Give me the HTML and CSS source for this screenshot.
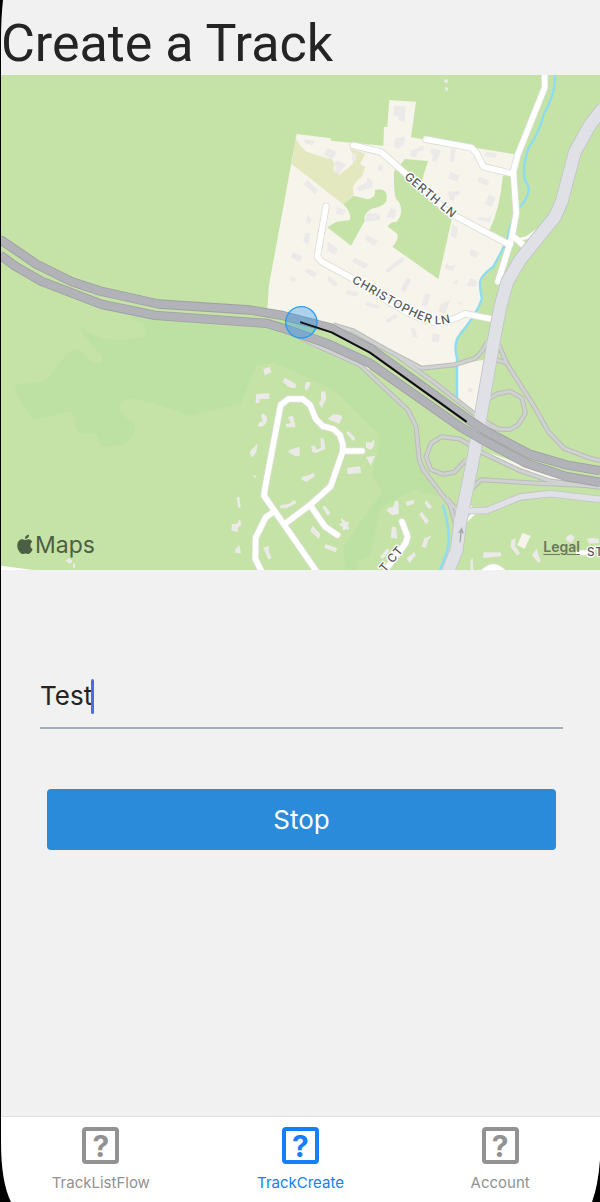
FILE: index.html
```html
<!DOCTYPE html>
<html lang="en">
<head>
<meta charset="utf-8">
<meta name="viewport" content="width=device-width, initial-scale=1">
<title>Create a Track</title>
<link rel="stylesheet" href="styles.css">
</head>
<body>
<div class="screen">
  <header class="header"><h1 class="title">Create a Track</h1></header>

  <div class="map">
    <svg class="map-canvas" viewBox="3 0 1797 1485" preserveAspectRatio="xMidYMid slice" role="img" aria-label="Map with the recorded track">
      <defs>
        <path id="gerth" d="M1211 308L1370 442"/>
        <path id="christopher" d="M1054 622C1150 674 1250 742 1310 748Q1346 750 1385 728"/>
        <path id="court" d="M1154 1494L1214 1424"/>
        <path id="up1" d="M0 493L110 568L215 620L300 648L475 687L750 705L850 722L990 758L1110 820L1415 1040L1460 1070L1590 1138L1700 1170L1800 1187"/>
        <path id="down1" d="M0 540L45 573L125 619L305 688L465 721L800 745L860 763L980 805L1110 865L1380 1055L1440 1090L1580 1165L1700 1205L1800 1222"/>
        <g id="ramps">
          <path d="M870 770L935 805L1080 870L1140 927L1224 1005L1248 1055L1258 1155L1270 1185L1350 1290L1372 1365"/>
          <path d="M1340 1270L1375 1310"/>
          <path d="M1000 750L1060 768L1160 825L1265 880L1365 869L1425 850Q1445 835 1462 800"/>
          <path d="M1195 845L1300 920L1440 1030L1500 1065"/>
          <path d="M1497 810L1520 865L1600 990L1645 1070L1692 1120L1765 1148L1800 1157"/>
          <path d="M1490 855L1520 863"/>
          <path d="M1466 972L1490 957L1530 949L1566 969L1576 1015L1554 1050L1530 1063L1500 1063L1455 1050"/>
          <path d="M1410 1110L1380 1092L1325 1085L1293 1105L1278 1145L1292 1183L1330 1198L1363 1192L1398 1155"/>
          <path d="M1440 1130L1560 1187L1650 1218L1800 1237"/>
          <path d="M1416 1240L1443 1214L1600 1224L1800 1234"/>
        </g>
        <g id="main-road">
          <path d="M1810 98L1770 150L1725 230L1685 380L1665 425L1560 555L1522 620L1500 700L1480 805L1420 1150L1380 1345L1370 1425L1340 1500"/>
        </g>
        <g id="local">
          <path d="M1634 -10L1634 38L1553 240L1540 290L1549 415L1535 490L1494 620"/>
          <path d="M1060 211L1145 232L1230 308L1345 412L1530 510"/>
          <path d="M1278 193L1415 218L1430 235L1450 275L1540 297"/>
          <path d="M978 394L952 545L965 560L1060 612C1150 672 1250 738 1310 742Q1345 743 1395 716L1475 732"/>
          <path d="M1545 488L1570 510"/>
        </g>
        <g id="village">
          <path d="M950 1490L792 1262L795 1240L842 990L865 972L908 972L930 990L948 1033L968 1053L1000 1062L1020 1080L1029 1110L1028 1130L992 1234L930 1290L857 1345"/>
          <path d="M1028 1128L1086 1128"/>
          <path d="M930 1290L975 1355L1012 1380"/>
          <path d="M820 1311L797 1327L767 1388L766 1452L785 1490"/>
          <path d="M1206 1340L1223 1385L1217 1405L1160 1480"/>
          <path d="M1450 1492Q1480 1462 1510 1492"/>
        </g>
      </defs>

      <rect class="land" width="1800" height="1485"/>

      <!-- woodland -->
      <path class="wood" d="M45 930L120 920Q150 910 175 870Q200 830 235 823L275 860L305 865Q312 852 295 830L250 780L235 750Q280 790 350 797L430 787Q445 770 430 745L395 735L400 720L800 745L1080 870L1224 1005L1258 1155L1340 1270L1240 1245L1145 1325L1110 1445L1072 1460L1070 1485H640V1004L570 1023Q420 965 375 973Q350 985 360 1010Q370 1025 400 1042Q412 1055 400 1078Q380 1118 305 1115L285 1075L245 1076Q228 1072 226 1050L215 1008L100 1035Q45 965 45 930Z"/>
      <path class="land" d="M570 1023L725 985L770 870L825 863L1000 945L1135 1075L1135 1115L1115 1200L1147 1250L1030 1415L1035 1485H570Z"/>
      <path class="land" d="M1140 1300L1240 1245L1340 1275L1370 1485H1072V1460L1110 1445Z"/>

      <!-- residential land -->
      <path class="lot" d="M890 177L993 190L992 197L1150 212L1152 156L1162 156L1168 75L1248 80L1233 187L1545 238L1555 260L1508 305Q1500 400 1468 466L1510 508Q1490 560 1470 582Q1440 600 1438 625L1445 670Q1430 725 1380 770L1367 800L1371 980L1440 1030L1470 840L1450 855L1270 882L1050 762L802 702L807 630Z"/>
      <path class="land" d="M1212 878L1270 888L1368 873L1370 970Z"/>
      <path class="lot" d="M930 790L1000 810L1110 875L1106 893L1040 850Z M1440 1125L1580 1172L1700 1210L1800 1235L1650 1218Z M1345 1275L1370 1310L1367 1345Z"/>
      <path class="park" d="M887 190Q900 215 920 230L980 250Q1010 250 1000 285L1020 298L1058 268Q1070 245 1048 220L1096 236L1080 268L1096 275L1085 305Q1050 330 1062 358L1030 388L875 267Z"/>
      <path class="land" d="M1030 388L1060 362L1105 373Q1130 365 1125 345Q1165 335 1160 375Q1155 393 1120 400Q1090 410 1094 438L1053 512L982 457L1010 440L1050 435Q1054 410 1030 388Z"/>
      <path class="land" d="M1215 252L1284 258L1268 308L1265 345L1356 430L1315 612L1177 515Q1200 490 1190 475L1163 455Q1170 440 1190 440Q1215 410 1195 378Q1180 375 1182 290Z"/>

      <!-- buildings -->
      <g class="building">
        <path d="M1183 92l34 2-3 46-18-3v-12l-15-3z M914 192l28 5-3 14-26-6z M983 218l28 14-15 21-25-15z M1057 235l13 2-2 22-14-3z M1013 256l25 14-22 27-18-6 10-12-8-14z M1066 340l35-18v-16l18 13-3 18-38 12z M1186 190l28-6-2 26-18 12-12-9z M1232 228l40-18-3 18-13 0-10 20-14-4z M1294 220l27 6-3 14-10 20-12-3 2-18-8-8z M1353 220l14 3-6 40-12-4z M1460 230l30 6-4 12-34-4z"/>
        <path d="M922 315l33 30-10 12-33-30z M1137 268l12 5-3 15-12-3z M1010 396l28 10-8 15-22-5z M1100 415l38 0 3 20-45 5z M1174 398l14 8-4 25-24-5 3-12z M1100 480l34 18-12 15-28-20z M922 418l12 15-3 15-14-6z M916 474l14 0-5 36-16-12z M985 500l28 22-10 18-22-16z M880 530l26 14-6 18-26-14z M873 607l14 3-2 12-12-5z M923 580l28 15-8 12-28-16z M988 603l25 22-8 12-24-22z M1063 548l42 20-9 14-40-22z M1042 646l34 6-8 14-30-10z M1101 680l40 12-7 10-40-12z"/>
        <path d="M1352 290l15 8 12 4-8 17-27-9z M1344 350l36-2-2 12-14 4-3 15-12-4z M1438 303l30 14-6 15-28-12z M1467 358l20 10-14 28-18-10z M1440 425l25 6 10-14-5 25-38-8z M1356 448l18 10-6 33-16-7z M1413 523l24 9-9 16-20-8z M1338 564l12 10 18-5-10 20-24-9z M1376 610l-5 18-12-4z M1410 610l20 5-2 20-28-3z M1208 545l-52 40 8 8 48-36z M1220 608l14 6-18 38-14-8z M1276 654l15 6-12 36-14-7z M1320 690l32-17-17 43-19-8z M1157 735l30-18 6 10-32 18z M1230 755l16 7 6 26-14-3z M1300 773l20 8-5 24-21-7z M1375 685l12-6-4 12z M1407 937l13 5-5 12-11-6z M1334 12l11 2-4 12-9-5z M1337 35l9 4-4 10-8-6z"/>
        <path d="M790 882l20-6 4 16-20 9z M854 908l18 10 16 10-2 12-18-3-20-16z M768 957l40-2v16l-28 2-3 12h-10z M918 920l14 2-4 14-10 12-4-12z M785 1015q22 6 15 25q-8 18-26 14l2-10q18-8 8-16z M908 950l-10 0z M963 950l12-2 4 22-14 30-8-16 6-8z M1000 1018l22 2 5 8-10 18-34-14z M864 1026l15-4 8 34-28 1-2-10 16-2z M773 1106l-20 20-4 8 8 14 12-18z M867 1125l32-10 0 28-14 0-20-12z M933 1112l12 0 4 12 14-6-2-30 10 4 6 30-30 12-10-4z M1045 1068l22 22-8 8-20-24z M1098 1100l14 3 12-10-2 20-10 12-14-8z M1098 1146l28-4-14 30z M1042 1178l38-4 4 20-42 4z M907 1205l20-4 14-8 4 10-26 18-16-8z M842 1290l26-4 16-12 6 10-30 16-20 0z M757 1200l12 4-4 6z M710 1267l8-2 4 32-8 2z M975 1292l16 22-8 8-16-26z M696 1348l14-2 10-14 4 18-10 8-2 14-18-6z M1022 1328l16 12 10 2-4 10 4 12-10-2-8 6-2-12-12-8 10-4z M937 1352l24 24-4 16-26-24z M976 1407l36 13-5 12-34-14z M790 1418l18-6-2 14 8 24-8 4z M706 1422l12-12 5 25-18-2z"/>
        <path d="M1163 1300l16-4 6-18 10 0 2 38-20 5-15-12z M1216 1280l27-6-2 12-20 7z M1278 1275l18 20-8 8-14-18z M1265 1310l22 28-9 10-20-30z M1176 1355h12l4 36-20-3z M1265 1415l8-25 22-8-10 12-8 25z M1220 1450l22-18 6 8-20 24z M1140 1445l22-25 6 8-20 24z M1534 1395l12-5v25l14 20-8 7-20-26z M1450 1432h52l2 12-54 5z M1600 1435l10-14 4 14 8 24-6 6-20-24z M1700 1384l14-6 10 10-10 16-16-8z M1760 1392l16-4 20 4 2 12-30 2z M1412 1455l6-6 2 36h-8z M197 1457l10-8 11 10-9 8z M219 1465h6v13h-6z"/>
      </g>
      <path class="lot" d="M1567 1374l25 8-18 39-22-10z"/>
      <path class="local-road" stroke-width="15" d="M1735 1433H1765"/>
      <path class="corner-lot" d="M0 1472L100 1485H0Z"/>

      <!-- streams -->
      <path class="stream" d="M1664 -5Q1670 50 1632 115Q1620 170 1585 220Q1565 280 1577 320Q1600 345 1565 390Q1535 420 1520 500L1480 575Q1445 600 1440 620Q1440 650 1446 670Q1435 710 1375 785Q1360 810 1371 850V985"/>
      <path class="stream" d="M1328 1290Q1355 1370 1341 1430L1320 1485"/>

      <!-- streets -->
      <use href="#local" class="street-edge"/><use href="#village" class="street-edge"/>
      <use href="#local" class="street"/><use href="#village" class="street"/>
      <path class="thin-street" d="M1548 496L1580 488L1620 460M1400 1290L1430 1308L1390 1345"/>

      <use href="#ramps" class="ramp-edge"/>
      <path class="arterial-edge minor" d="M1400 1307L1460 1307L1560 1266L1650 1256L1800 1273"/>
      <use href="#main-road" class="arterial-edge"/>
      <use href="#ramps" class="ramp"/>
      <use href="#main-road" class="arterial"/>
      <path class="arterial minor" d="M1400 1307L1460 1307L1560 1266L1650 1256L1800 1273"/>
      <path class="arrow" d="M1380 1402L1384 1362M1377 1374L1385 1361L1389 1375"/>

      <use href="#up1" class="highway-edge"/><use href="#down1" class="highway-edge"/>
      <use href="#up1" class="highway"/><use href="#down1" class="highway"/>

      <text class="road-name"><textPath href="#gerth">GERTH LN</textPath></text>
      <text class="road-name"><textPath href="#christopher">CHRISTOPHER LN</textPath></text>
      <text class="road-name"><textPath href="#court">T CT</textPath></text>
      <text class="road-name" x="1761" y="1443">ST</text>

      <circle class="position" cx="904" cy="742" r="47"/>
      <path class="track" d="M903 742L995 772L1110 833L1398 1039"/>

      <g class="brand">
        <path d="M75 1395C70 1392 62 1391 57 1397C50 1404 51 1417 55 1425C59 1432 63 1438 69 1437C73 1436 77 1434 81 1436C88 1440 94 1432 98 1422C90 1418 89 1406 97 1400C91 1391 83 1392 79 1394Z"/>
        <path d="M75 1391C74 1384 80 1379 87 1379C88 1386 82 1391 75 1391Z"/>
      </g>
    </svg>
    <span class="maps-word">Maps</span>
    <a class="legal" href="#legal">Legal</a>
  </div>

  <main class="form">
    <div class="field">
      <input class="name-input" type="text" value="Test" aria-label="Track name">
      <span class="caret"></span>
    </div>
    <button class="stop" type="button">Stop</button>
  </main>

  <nav class="tabs">
    <a class="tab" href="#list"><span class="tab-icon" aria-hidden="true">?</span><span>TrackListFlow</span></a>
    <a class="tab active" href="#create" aria-current="page"><span class="tab-icon" aria-hidden="true">?</span><span>TrackCreate</span></a>
    <a class="tab" href="#account"><span class="tab-icon" aria-hidden="true">?</span><span>Account</span></a>
  </nav>

  <svg class="corner top-left" viewBox="0 0 4 40" aria-hidden="true"><path d="M0 0H3Q1 18 1 40H0Z"/></svg>
  <svg class="corner bottom-left" viewBox="0 0 12 60" aria-hidden="true"><path d="M0 0H1Q1 40 11 60H0Z"/></svg>
  <svg class="corner bottom-right" viewBox="0 0 9 42" aria-hidden="true"><path d="M9 0Q7 26 1 42H9Z"/></svg>
</div>
</body>
</html>
```
FILE: styles.css
```css
* { box-sizing: border-box; }

body {
  margin: 0;
  background: #000;
  color: #242424;
  font-family: Inter, "Liberation Sans", sans-serif;
}

.screen {
  position: relative;
  display: flex;
  flex-direction: column;
  min-height: 100vh;
  padding-left: 1px;
  background: linear-gradient(90deg, #000 1px, #f1f1f1 1px);
}

.header { padding: 12px 0 0; }
.title {
  margin: 0;
  font-family: Roboto, "Liberation Sans", sans-serif;
  font-size: 52px;
  line-height: 63px;
  font-weight: 400;
}

.map { position: relative; overflow: hidden; }
.map-canvas { display: block; width: 100%; height: auto; }

.land { fill: #c5e3a6; }
.wood { fill: #bde1a2; }
.lot { fill: #f6f4eb; }
.corner-lot { fill: #fff; }
.park { fill: #e4e8bf; }
.building { fill: #ebeae8; }
.stream { fill: none; stroke: #8edcf2; stroke-width: 7; }

.street, .street-edge, .thin-street, .local-road { fill: none; stroke-linecap: round; stroke-linejoin: round; }
.street-edge { stroke: #dcded6; stroke-width: 22; }
.street { stroke: #fff; stroke-width: 17; }
.thin-street { stroke: #fff; stroke-width: 9; }
.local-road { stroke: #fff; }

.ramp, .ramp-edge, .arterial, .arterial-edge, .highway, .highway-edge { fill: none; stroke-linejoin: round; }
.ramp-edge { stroke: #b9bcb8; stroke-width: 15; }
.ramp { stroke: #d0d2d1; stroke-width: 9; }
.arterial-edge { stroke: #c2c3c7; stroke-width: 41; }
.arterial { stroke: #e0e1e6; stroke-width: 36; }
.arterial-edge.minor { stroke-width: 22; }
.arterial.minor { stroke-width: 17; }
.highway-edge { stroke: #9fa0a1; stroke-width: 28; }
.highway { stroke: #b2b2b9; stroke-width: 23; }
.arrow { fill: none; stroke: #a5a6a9; stroke-width: 4; }

.road-name {
  fill: #55585a;
  stroke: #fff;
  stroke-width: 8;
  stroke-linejoin: round;
  paint-order: stroke;
  font-size: 35px;
  font-weight: 500;
  letter-spacing: 2px;
}

.position { fill: #2094f359; stroke: #2a9cf3; stroke-width: 4; }
.track { fill: none; stroke: #111; stroke-width: 6; stroke-linecap: round; stroke-linejoin: round; }
.brand { fill: #4d5f42; }

.maps-word {
  position: absolute;
  left: 34px;
  bottom: 9px;
  color: #4d5f42;
  font-size: 23px;
  line-height: 32px;
}
.legal {
  position: absolute;
  right: 20px;
  bottom: 13px;
  color: #69785c;
  font-size: 14px;
  line-height: 20px;
  font-weight: 600;
  text-underline-offset: 2px;
}

.form {
  display: flex;
  flex: 1;
  flex-direction: column;
  gap: 60px;
  padding: 94px 37px 40px 39px;
}
.field { position: relative; border-bottom: 2px solid #a3adb5; }
.name-input {
  display: block;
  width: 100%;
  height: 63px;
  padding: 0;
  border: 0;
  outline: 0;
  background: transparent;
  color: #242424;
  font: 400 26px/34px Inter, "Liberation Sans", sans-serif;
}
.caret {
  position: absolute;
  left: 51px;
  top: 15px;
  width: 3px;
  height: 35px;
  border-radius: 2px;
  background: #476cf0;
}
.stop {
  height: 61px;
  margin: 0 7px;
  border: 0;
  border-radius: 4px;
  background: #2a8bdb;
  color: #fff;
  font: 400 26px/34px Inter, "Liberation Sans", sans-serif;
}

.tabs {
  display: flex;
  height: 86px;
  border-top: 1px solid #e0e0e0;
  background: #fff;
}
.tab {
  display: flex;
  flex: 1;
  flex-direction: column;
  align-items: center;
  gap: 8px;
  padding-top: 10px;
  color: #929292;
  font-size: 15px;
  line-height: 22px;
  text-decoration: none;
}
.tab.active { color: #157efb; }
.tab-icon {
  display: flex;
  align-items: center;
  justify-content: center;
  width: 37px;
  height: 37px;
  border: 4px solid;
  border-radius: 4px;
  font-size: 30px;
  line-height: 30px;
  font-weight: 700;
}

.corner { position: absolute; fill: #000; }
.top-left { left: 0; top: 0; width: 4px; height: 40px; }
.bottom-left { left: 0; bottom: 0; width: 12px; height: 60px; }
.bottom-right { right: 0; bottom: 0; width: 9px; height: 42px; }
```
